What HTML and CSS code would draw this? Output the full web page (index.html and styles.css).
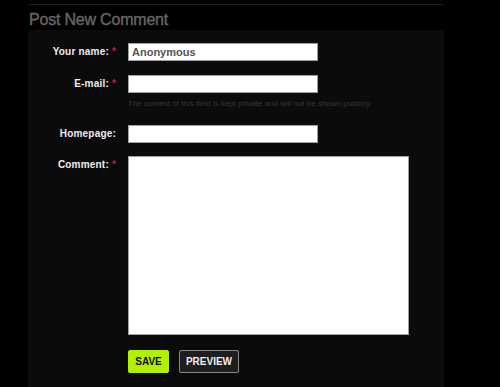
FILE: index.html
```html
<!DOCTYPE html>
<html lang="en">

<head>
	<title>Post New Comment</title>
	<link rel="stylesheet" href="styles.css">
</head>

<body>
	<div class="wrap">
		<div class="rule"></div>
		<h2 class="title">Post New Comment</h2>
		<form class="panel">
			<div class="row">
				<label class="lbl">Your name: <span class="req">*</span></label>
				<input class="txt name" type="text" value="Anonymous">
			</div>
			<div class="row">
				<label class="lbl">E-mail: <span class="req">*</span></label>
				<div>
					<input class="txt" type="text">
					<div class="desc">The content of this field is kept private and will not be shown publicly.</div>
				</div>
			</div>
			<div class="row homepage">
				<label class="lbl">Homepage:</label>
				<input class="txt" type="text">
			</div>
			<div class="row">
				<label class="lbl lbl-area">Comment: <span class="req">*</span></label>
				<textarea class="area"></textarea>
			</div>
			<div class="row buttons">
				<button class="btn save" type="button">SAVE</button>
				<button class="btn preview" type="button">PREVIEW</button>
			</div>
		</form>
	</div>
</body>

</html>
```

FILE: styles.css
```css
		body {
			background-color: #000;
			margin: 0;
			font-family: "Liberation Sans", Arial, sans-serif;
			color: #fff;
		}

		.wrap {
			margin-left: 28px;
			width: 416px;
			padding-top: 4px;
		}

		.rule {
			border-top: 1px solid #1c1c1c;
		}

		.title {
			color: #666;
			font-size: 16px;
			font-weight: normal;
			letter-spacing: -0.2px;
			-webkit-text-stroke: 0.4px #666;
			margin: 0;
			padding: 5px 0 0 1px;
			height: 20px;
			line-height: 20px;
		}

		.panel {
			background-color: #0b0b0b;
			padding: 13px 0 12px 0;
			min-height: 320px;
		}

		.row {
			display: flex;
			align-items: flex-start;
			gap: 12px;
			margin-bottom: 14px;
		}

		.lbl {
			display: block;
			width: 88px;
			height: 18px;
			text-align: right;
			font-size: 10px;
			font-weight: bold;
			letter-spacing: 0.2px;
			line-height: 18px;
			color: #eee;
		}

		.lbl-area {
			line-height: 14px;
			padding-top: 2px;
		}

		.req {
			color: #c2185b;
			font-size: 10px;
			line-height: 1;
		}

		.txt {
			display: block;
			box-sizing: border-box;
			width: 190px;
			height: 18px;
			margin: 0;
			padding: 0 3px;
			border: 1px solid #a0a0a0;
			background: #fff;
			font-family: inherit;
			font-size: 12px;
		}

		.name {
			color: #555;
			font-weight: bold;
			font-size: 11px;
		}

		.desc {
			font-size: 8px;
			line-height: 10px;
			color: #363636;
			margin-top: 6px;
			margin-bottom: 2px;
			white-space: nowrap;
		}

		.homepage {
			margin-bottom: 13px;
		}

		.area {
			display: block;
			box-sizing: border-box;
			width: 281px;
			height: 179px;
			margin: 0;
			border: 1px solid #a0a0a0;
			background: #fff;
			resize: none;
		}

		.buttons {
			padding-left: 100px;
			gap: 10px;
			margin-top: 15px;
		}

		.btn {
			height: 23px;
			border-radius: 2px;
			font-family: inherit;
			font-size: 10px;
			font-weight: bold;
			padding: 0;
		}

		.save {
			width: 41px;
			background: #b3f000;
			color: #111;
			border: 1px solid #b3f000;
		}

		.preview {
			width: 60px;
			background: #1e1e1e;
			color: #eee;
			border: 1px solid #888;
		}
```
